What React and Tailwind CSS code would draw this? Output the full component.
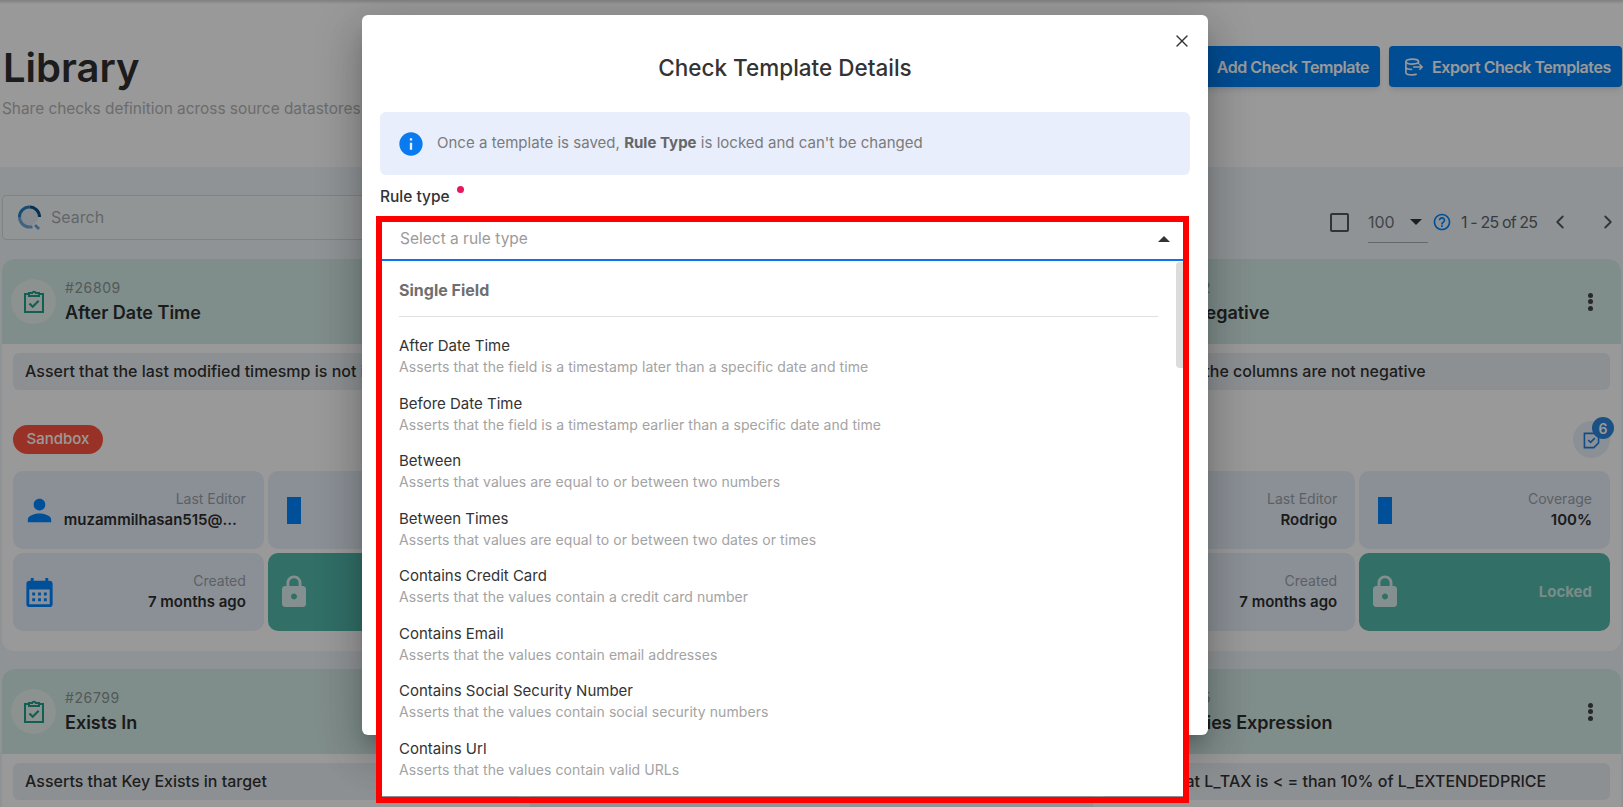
import { ChevronLeft, ChevronRight, X } from 'lucide-react';

const PERSON = "M12 12c2.21 0 4-1.79 4-4s-1.79-4-4-4-4 1.79-4 4 1.79 4 4 4zm0 2c-2.67 0-8 1.34-8 4v2h16v-2c0-2.66-5.33-4-8-4z";
const LOCK = "M18 8h-1V6c0-2.76-2.24-5-5-5S7 3.24 7 6v2H6c-1.1 0-2 .9-2 2v10c0 1.1.9 2 2 2h12c1.1 0 2-.9 2-2V10c0-1.1-.9-2-2-2zm-6 9c-1.1 0-2-.9-2-2s.9-2 2-2 2 .9 2 2-.9 2-2 2zm3.1-9H8.9V6c0-1.71 1.39-3.1 3.1-3.1 1.71 0 3.1 1.39 3.1 3.1v2z";
const CALENDAR = "M19 4h-1V2h-2v2H8V2H6v2H5c-1.11 0-1.99.9-1.99 2L3 20c0 1.1.89 2 2 2h14c1.1 0 2-.9 2-2V6c0-1.1-.9-2-2-2zm0 16H5V10h14v10zM9 14H7v-2h2v2zm4 0h-2v-2h2v2zm4 0h-2v-2h2v2zm-8 4H7v-2h2v2zm4 0h-2v-2h2v2zm4 0h-2v-2h2v2z";
const INFO = "M12 2C6.48 2 2 6.48 2 12s4.48 10 10 10 10-4.48 10-10S17.52 2 12 2zm1 15h-2v-6h2v6zm0-8h-2V7h2v2z";
const HELP = "M11 18h2v-2h-2v2zm1-16C6.48 2 2 6.48 2 12s4.48 10 10 10 10-4.48 10-10S17.52 2 12 2zm0 18c-4.41 0-8-3.59-8-8s3.59-8 8-8 8 3.59 8 8-3.59 8-8 8zm0-14c-2.21 0-4 1.79-4 4h2c0-1.1.9-2 2-2s2 .9 2 2c0 2-3 1.75-3 5h2c0-2.25 3-2.5 3-5 0-2.21-1.79-4-4-4z";

const rules = [
  ['After Date Time', 'Asserts that the field is a timestamp later than a specific date and time'],
  ['Before Date Time', 'Asserts that the field is a timestamp earlier than a specific date and time'],
  ['Between', 'Asserts that values are equal to or between two numbers'],
  ['Between Times', 'Asserts that values are equal to or between two dates or times'],
  ['Contains Credit Card', 'Asserts that the values contain a credit card number'],
  ['Contains Email', 'Asserts that the values contain email addresses'],
  ['Contains Social Security Number', 'Asserts that the values contain social security numbers'],
  ['Contains Url', 'Asserts that the values contain valid URLs'],
];

function Filled({ d, className }) {
  return (
    <svg viewBox="0 0 24 24" fill="currentColor" className={className}>
      <path d={d} />
    </svg>
  );
}

function ClipboardIcon() {
  return (
    <svg viewBox="0 0 22 24" fill="none" stroke="currentColor" strokeWidth="2" className="w-[22px] h-6 text-[#1f9e8d]">
      <path d="M6 4H2v18h18V4h-4" />
      <path d="M6 6V3h3.2a1.9 1.9 0 0 1 3.6 0H16v3z" />
      <path d="M6.5 13.5l3.2 3.2 6-6" strokeWidth="2.2" />
    </svg>
  );
}

function Tile({ label, value, icon }) {
  return (
    <div className="h-[78px] rounded-[10px] bg-[#e8f0fb] flex items-center justify-between pl-[8px] pr-[18px]">
      <div className="w-[36px] flex justify-center shrink-0">{icon}</div>
      <div className="min-w-0 text-right">
        <div className="text-[14px] leading-[20px] text-[#9aa0a8]">{label}</div>
        <div className="text-[15px] leading-[22px] font-semibold text-[#2e2e2e] truncate max-w-[182px]">{value}</div>
      </div>
    </div>
  );
}

function CheckCard({ id, title, text, sandbox, editor, badge }) {
  return (
    <div className="bg-white rounded-[12px] h-[392px] overflow-hidden">
      <div className="h-[85px] bg-[#d4ece8] rounded-t-[12px] flex items-center pl-[9px] pr-[28px]">
        <div className="w-[45px] h-[45px] rounded-full bg-[#e9f3f1] flex items-center justify-center">
          <ClipboardIcon />
        </div>
        <div className="ml-[9px] flex-1 min-w-0 pt-[2px]">
          <div className="text-[14px] leading-[20px] tracking-[0.6px] text-[#8a9594]">{id}</div>
          <div className="text-[18px] leading-[29px] font-semibold text-[#2e2e2e]">{title}</div>
        </div>
        <div className="flex flex-col gap-[1.5px]">
          <span className="w-[5px] h-[5px] rounded-full bg-[#444]" />
          <span className="w-[5px] h-[5px] rounded-full bg-[#444]" />
          <span className="w-[5px] h-[5px] rounded-full bg-[#444]" />
        </div>
      </div>
      <div className="px-[11px] pt-[9px]">
        <div className="h-[37px] rounded-[6px] bg-[#ebf1f5] px-[12px] pb-[2px] flex items-center text-[16px] font-medium text-[#333] whitespace-nowrap overflow-hidden">
          {text}
        </div>
        <div className="h-[35px] mt-[35px] mb-[11px] flex items-start justify-between">
          {sandbox && <span className="h-[29px] w-[90px] rounded-full bg-[#ff5440] text-white text-[15px] font-medium flex items-center justify-center">Sandbox</span>}
          {badge && (
            <div className="ml-auto relative w-[37px] h-[37px] -mt-[4px] rounded-full bg-[#e8f0fb] flex items-center justify-center text-[#1f7fe0]">
              <svg viewBox="0 0 18 18" fill="none" stroke="currentColor" strokeWidth="1.7" className="w-[17px] h-[17px] mt-[2px]">
                <path d="M1.5 1.5h15v10l-5 5h-10z" />
                <path d="M5.5 8.5l2.5 2.5 4.5-4.5" />
              </svg>
              <span className="absolute -top-[4px] -right-[4px] w-[22px] h-[22px] rounded-full bg-[#2c86dc] text-white text-[14px] font-semibold flex items-center justify-center">{badge}</span>
            </div>
          )}
        </div>
        <div className="grid grid-cols-2 gap-[4px]">
          <Tile label="Last Editor" value={editor} icon={<Filled d={PERSON} className="w-[35px] h-[35px] text-[#0085ff]" />} />
          <Tile label="Coverage" value="100%" icon={<span className="w-[14px] h-[27px] bg-[#0085ff]" />} />
          <Tile label="Created" value="7 months ago" icon={<Filled d={CALENDAR} className="w-[35px] h-[35px] text-[#0085ff]" />} />
          <div className="h-[78px] rounded-[10px] bg-[#53b9ac] flex items-center justify-between pl-[8px] pr-[18px]">
            <Filled d={LOCK} className="w-[36px] h-[36px] text-white/80" />
            <span className="text-[15px] font-bold text-white/70">Locked</span>
          </div>
        </div>
      </div>
    </div>
  );
}

function Page() {
  return (
    <div className="h-full flex flex-col">
      <div className="h-[4px] bg-gradient-to-b from-[#d4d4d4] to-white" />
      <div className="h-[163px] shrink-0 bg-white flex justify-between pl-[3px] pr-[1px]">
        <div>
          <h1 className="mt-[36px] text-[40px] leading-[56px] font-semibold text-[#303030]">Library</h1>
          <p className="text-[15.4px] leading-[24px] text-[#b4b4b4] mt-[1px] -ml-[1px]">Share checks definition across source datastores</p>
        </div>
        <div className="flex gap-[9px] mt-[42px]">
          <button className="h-[41px] rounded-[4px] bg-[#0080f7] text-white text-[16px] tracking-[-0.45px] font-semibold pl-[38px] pr-[11px] shadow-md">Add Check Template</button>
          <button className="h-[41px] w-[233px] rounded-[4px] bg-[#0080f7] text-white text-[16px] tracking-[-0.45px] font-semibold flex items-center pl-[15px] gap-[8px] shadow-md">
            <svg viewBox="0 0 22 20" fill="none" stroke="currentColor" strokeWidth="1.8" className="w-[20px] h-[18px]">
              <ellipse cx="9" cy="4" rx="7" ry="2.8" />
              <path d="M2 4v12c0 1.5 3 2.8 7 2.8 2 0 4-.4 5-1M16 4v3M2 10c0 1.5 3 2.8 7 2.8" />
              <path d="M10 10h10M17 7l3 3-3 3" />
            </svg>
            Export Check Templates
          </button>
        </div>
      </div>
      <div className="flex-1 bg-[#eff6fb] min-h-0 overflow-hidden">
        <div className="flex items-start px-[2px] pt-[28px] h-[92px]">
          <div className="w-[1000px] h-[45px] rounded-[4px] border border-[#d6dadd] bg-[#f4f8fb] flex items-center pl-[14px]">
            <svg viewBox="0 0 26 26" className="w-[26px] h-[26px]" fill="none" strokeWidth="3">
              <circle cx="12.5" cy="12" r="8.5" fill="#dfe9f0" stroke="none" />
              <path d="M12.5 2a10 10 0 0 1 10 10" stroke="#0f4f86" />
              <path d="M12.5 2a10 10 0 0 0-10 10" stroke="#2a7fc0" />
              <path d="M2.5 12a10 10 0 0 0 10 10h3" stroke="#6ba6d6" />
              <path d="M18 20l4 4" stroke="#6ba6d6" />
            </svg>
            <span className="ml-[8px] -mt-[1px] text-[16px] text-[#a6abae]">Search</span>
          </div>
          <div className="ml-auto flex items-center h-[54px] relative text-[#6f7375]">
            <span className="w-[19px] h-[19px] border-2 border-[#555] rounded-[2px]" />
            <div className="ml-[19px] w-[60px] h-[42px] border-b border-[#a8acae] flex items-center justify-between pr-[6px] text-[16px]">
              100
              <span className="w-0 h-0 border-l-[6px] border-r-[6px] border-t-[6px] border-l-transparent border-r-transparent border-t-[#333]" />
            </div>
            <Filled d={HELP} className="w-[20px] h-[20px] text-[#0085ff] ml-[4px]" />
            <span className="ml-[9px] text-[16px] tracking-[-0.85px] w-[88px] text-[#5f6365]">1 - 25 of 25</span>
            <ChevronLeft size={22} strokeWidth={2} className="text-[#555]" />
            <ChevronRight size={22} strokeWidth={2} className="ml-[26px] text-[#555] mr-[2px]" />
          </div>
        </div>
        <div className="grid grid-cols-3 gap-[18px] px-[2px]">
          <CheckCard id="#26809" title="After Date Time" text="Assert that the last modified timesmp is not in the future" sandbox editor="muzammilhasan515@gmail.com" />
          <div />
          <CheckCard id="#26792" title="Not Negative" text="Assert that the columns are not negative" editor="Rodrigo" badge="6" />
          <CheckCard id="#26799" title="Exists In" text="Asserts that Key Exists in target" editor="Rodrigo" />
          <div />
          <CheckCard id="#26795" title="Satisfies Expression" text="Assert that L_TAX is < = than 10% of L_EXTENDEDPRICE" editor="Rodrigo" />
        </div>
      </div>
    </div>
  );
}

function Modal() {
  return (
    <div className="absolute left-[362px] top-[15px] w-[846px] h-[720px] bg-white rounded-[6px] shadow-[0_11px_15px_-7px_rgba(0,0,0,0.2),0_24px_38px_3px_rgba(0,0,0,0.14),0_9px_46px_8px_rgba(0,0,0,0.12)]">
      <div className="flex justify-end pt-[16px] pr-[16px] h-[35px]">
        <X size={20} strokeWidth={1.6} className="text-[#333]" />
      </div>
      <h2 className="text-center text-[22.5px] leading-[36px] font-medium text-[#333]">Check Template Details</h2>
      <div className="mx-[18px] mt-[26px] h-[63px] rounded-[6px] bg-[#e8eefb] flex items-center pl-[17px] text-[15px] text-[#7b7b7b]">
        <Filled d={INFO} className="w-[28px] h-[28px] text-[#0a7bef]" />
        <span className="ml-[12px] -mt-[1px] tracking-[0.02px]">Once a template is saved, <b className="font-bold text-[#666]">Rule Type</b> is locked and can't be changed</span>
      </div>
      <div className="mx-[18px] mt-[11px] text-[15.5px] leading-[22px] font-medium text-[#333] flex">
        Rule type
        <span className="ml-[7px] mt-[0px] w-[7px] h-[7px] rounded-full bg-[#e8175d]" />
      </div>
      {/* Select with its open list runs past the bottom of the dialog */}
      <div className="absolute left-[20px] top-[207px] w-[802px] bg-white">
        <div className="h-[39px] border-b-2 border-[#0a74e8] flex items-center justify-between pl-[18px] pr-[14px] pb-[4px] text-[15.5px] text-[#9b9b9b]">
          Select a rule type
          <span className="w-0 h-0 border-l-[6px] border-r-[6px] border-b-[6px] border-l-transparent border-r-transparent border-b-[#333]" />
        </div>
        <div className="relative h-[535px] overflow-hidden pl-[17px] pr-[26px]">
          <div className="absolute right-0 top-[1px] w-[8px] h-[106px] bg-[#dcdcdc] rounded-l-[4px]" />
          <div className="h-[56px] border-b border-[#e0e0e0] flex items-center pt-[2px] text-[16px] font-bold text-[#6f6f6f]">Single Field</div>
          <div className="pt-[18px]">
            {rules.map(([name, desc]) => (
              <div key={name} className="h-[57.5px]">
                <div className="text-[15px] leading-[22px] text-[#333]">{name}</div>
                <div className="text-[14px] leading-[20px] tracking-[0.07px] text-[#a3a3a3]">{desc}</div>
              </div>
            ))}
          </div>
        </div>
      </div>
    </div>
  );
}

export default function App() {
  return (
    <div className="relative w-[1623px] h-[807px] overflow-hidden bg-white font-['Inter',sans-serif]">
      <Page />
      <div className="absolute inset-0 bg-black/40" />
      <Modal />
      {/* red annotation frame from the screenshot */}
      <div className="absolute left-[376px] top-[216px] w-[813px] h-[587px] border-[6px] border-[#ff0000] pointer-events-none" />
    </div>
  );
}
